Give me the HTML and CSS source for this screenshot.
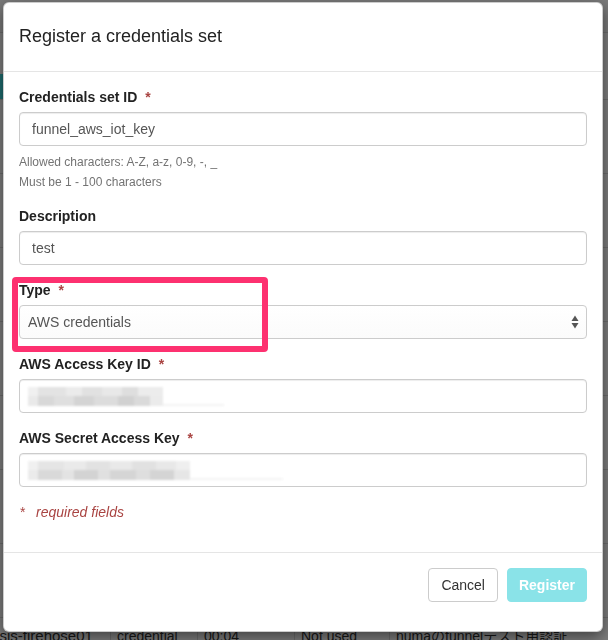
FILE: index.html
```html
<!DOCTYPE html>
<html lang="en">
<head>
<meta charset="utf-8">
<title>Register a credentials set</title>
<link rel="stylesheet" href="styles.css">
</head>
<body>
<div class="page">
  <div class="topbar"></div>
  <div class="subbar"></div>
  <div class="thead"><div class="cell c1"></div><div class="cell c2"></div><div class="cell c3"></div><div class="cell c4"></div><div class="cell c5"></div></div>
  <div class="row"><div class="cell c1"></div><div class="cell c2"></div><div class="cell c3"></div><div class="cell c4"></div><div class="cell c5"></div></div>
  <div class="row"><div class="cell c1"></div><div class="cell c2"></div><div class="cell c3"></div><div class="cell c4"></div><div class="cell c5"></div></div>
  <div class="row"><div class="cell c1"></div><div class="cell c2"></div><div class="cell c3"></div><div class="cell c4"></div><div class="cell c5"></div></div>
  <div class="row"><div class="cell c1"></div><div class="cell c2"></div><div class="cell c3"></div><div class="cell c4"></div><div class="cell c5"></div></div>
  <div class="row"><div class="cell c1"></div><div class="cell c2"></div><div class="cell c3"></div><div class="cell c4"></div><div class="cell c5"></div></div>
  <div class="row"><div class="cell c1"></div><div class="cell c2"></div><div class="cell c3"></div><div class="cell c4"></div><div class="cell c5"></div></div>
  <div class="row"><div class="cell c1"></div><div class="cell c2"></div><div class="cell c3"></div><div class="cell c4"></div><div class="cell c5"></div></div>
  <div class="row last"><div class="cell c1"><span class="shift">kinesis-firehose01</span></div><div class="cell c2">credential</div><div class="cell c3">00:04</div><div class="cell c4">Not used</div><div class="cell c5">numaのfunnelテスト用認証</div></div>
</div>
<div class="backdrop"></div>

<div class="modal">
  <div class="modal-header">
    <h4 class="modal-title">Register a credentials set</h4>
  </div>
  <div class="modal-body">
    <div class="form-group with-help">
      <div class="label">Credentials set ID <span class="req">*</span></div>
      <div class="input">funnel_aws_iot_key</div>
      <p class="help first">Allowed characters: A-Z, a-z, 0-9, -, _</p>
      <p class="help">Must be 1 - 100 characters</p>
    </div>
    <div class="form-group">
      <div class="label">Description</div>
      <div class="input">test</div>
    </div>
    <div class="form-group type-group">
      <div class="label">Type <span class="req">*</span></div>
      <div class="input select">
        <span class="select-value">AWS credentials</span>
        <svg class="select-arrows" width="8" height="14" viewBox="0 0 8 14" aria-hidden="true">
          <path d="M4 0.5 L7.5 6 L0.5 6 Z" fill="#555"/>
          <path d="M4 13.5 L7.5 8 L0.5 8 Z" fill="#555"/>
        </svg>
      </div>
      <div class="highlight"></div>
    </div>
    <div class="form-group">
      <div class="label">AWS Access Key ID <span class="req">*</span></div>
      <div class="input masked"><span class="mosaic mosaic-a"></span></div>
    </div>
    <div class="form-group">
      <div class="label">AWS Secret Access Key <span class="req">*</span></div>
      <div class="input masked"><span class="mosaic mosaic-b"></span></div>
    </div>
    <p class="required-note"><span class="req-star">*</span><span class="req-text">required fields</span></p>
  </div>
  <div class="modal-footer">
    <button class="btn btn-default" type="button">Cancel</button>
    <button class="btn btn-primary" type="button" disabled>Register</button>
  </div>
</div>
</body>
</html>
```

FILE: styles.css
```css
html, body {
  margin: 0;
  padding: 0;
}

body {
  width: 608px;
  height: 640px;
  overflow: hidden;
  background: #ffffff;
  font-family: "Liberation Sans", Arial, "Noto Sans CJK JP", sans-serif;
  font-size: 14px;
  line-height: 20px;
  color: #333333;
}

/* ---------- background page (under the backdrop) ---------- */
.page {
  width: 608px;
  height: 640px;
  overflow: hidden;
}

.topbar {
  height: 33px;
  box-sizing: border-box;
  border-bottom: 1px solid #dddddd;
  background: #f7f7f7;
}

.subbar {
  height: 41px;
  background: #ffffff;
}

.thead {
  display: flex;
  height: 26px;
  box-sizing: border-box;
  border-bottom: 1px solid #dddddd;
}

.thead .c1 {
  background: #3fdde0;
}

.row {
  display: flex;
  height: 74px;
  box-sizing: border-box;
  border-bottom: 1px solid #dddddd;
}

.cell {
  box-sizing: border-box;
  padding: 8px 6px;
  border-right: 1px solid #dddddd;
  white-space: nowrap;
  overflow: hidden;
}

.c1 { width: 111px; padding-left: 0; }
.c2 { width: 87px; }
.c3 { width: 97px; }
.c4 { width: 95px; }
.c5 { flex: 1; border-right: 0; }

.shift {
  display: inline-block;
  margin-left: -28px;
  font-size: 15px;
}

.backdrop {
  position: fixed;
  inset: 0;
  background: rgba(0, 0, 0, 0.5);
}

/* ---------- modal ---------- */
.modal {
  position: absolute;
  left: 3px;
  top: 2px;
  width: 600px;
  box-sizing: border-box;
  background: #ffffff;
  border: 1px solid rgba(0, 0, 0, 0.2);
  border-radius: 6px;
  box-shadow: 0 5px 15px rgba(0, 0, 0, 0.5);
}

.modal-header {
  padding: 21px 15px;
  border-bottom: 1px solid #e5e5e5;
}

.modal-title {
  margin: 0;
  font-size: 18px;
  line-height: 25px;
  padding-bottom: 1px;
  font-weight: normal;
  color: #222222;
}

.modal-body {
  padding: 15px 15px 15px;
}

.form-group {
  margin-bottom: 15px;
}

.form-group.with-help {
  margin-bottom: 14px;
}

.label {
  margin-bottom: 5px;
  font-weight: bold;
  color: #222222;
  line-height: 20px;
}

.req {
  margin-left: 4px;
  color: #a94442;
}

.input {
  height: 34px;
  box-sizing: border-box;
  padding: 6px 12px;
  border: 1px solid #cccccc;
  border-radius: 4px;
  box-shadow: inset 0 1px 1px rgba(0, 0, 0, 0.075);
  font-size: 14px;
  line-height: 20px;
  color: #555555;
  background: #ffffff;
}

.help {
  margin: 0;
  font-size: 12px;
  line-height: 20px;
  color: #737373;
}

.help.first {
  margin-top: 6px;
}

/* select */
.type-group {
  position: relative;
}

.select {
  display: flex;
  align-items: center;
  justify-content: space-between;
  padding: 6px 8px 6px 8px;
  background: linear-gradient(#ffffff, #fbfbfb);
  box-shadow: none;
}

.select-value {
  color: #555555;
}

.select-arrows {
  display: block;
  margin-right: -1px;
}

.highlight {
  position: absolute;
  top: -3px;
  left: -7px;
  width: 256px;
  height: 75px;
  box-sizing: border-box;
  border: 6px solid #fd3170;
  border-radius: 4px;
  pointer-events: none;
}

/* masked (blurred) values */
.masked {
  display: flex;
  align-items: center;
  padding-left: 8px;
}

.mosaic {
  display: block;
  height: 19px;
  filter: blur(0.9px);
}

.mosaic-a {
  width: 196px;
  background:
    linear-gradient(to right,
      #f0f0f0 0 10px, #e3e3e3 10px 38px, #ebebeb 38px 54px, #e1e1e1 54px 74px,
      #e8e8e8 74px 94px, #dedede 94px 110px, #ececec 110px 135px, transparent 135px) top left / 100% 9px no-repeat,
    linear-gradient(to right,
      #e9e9e9 0 10px, #d8d8d8 10px 26px, #dfdfdf 26px 46px, #d4d4d4 46px 66px,
      #dcdcdc 66px 90px, #d1d1d1 90px 106px, #dadada 106px 122px, #ebebeb 122px 135px, transparent 135px) bottom left / 100% 10px no-repeat,
    linear-gradient(#f3f3f3, #f3f3f3) bottom right / 61px 2px no-repeat;
}

.mosaic-b {
  width: 255px;
  background:
    linear-gradient(to right,
      #f0f0f0 0 10px, #e5e5e5 10px 36px, #eaeaea 36px 58px, #e2e2e2 58px 82px,
      #e9e9e9 82px 104px, #e1e1e1 104px 128px, #e8e8e8 128px 148px, #efefef 148px 162px, transparent 162px) top left / 100% 9px no-repeat,
    linear-gradient(to right,
      #ebebeb 0 10px, #d9d9d9 10px 34px, #e3e3e3 34px 46px, #d3d3d3 46px 70px,
      #e0e0e0 70px 82px, #d5d5d5 82px 108px, #dedede 108px 122px, #d4d4d4 122px 146px, #e6e6e6 146px 162px, transparent 162px) bottom left / 100% 10px no-repeat,
    linear-gradient(#f4f4f4, #f4f4f4) bottom right / 93px 2px no-repeat;
}

.required-note {
  margin: 0 0 15px;
  line-height: 20px;
  color: #a94442;
}

.req-star {
  display: inline-block;
  width: 16px;
  padding-left: 1px;
}

.req-text {
  font-style: italic;
}

/* footer */
.modal-footer {
  display: flex;
  justify-content: flex-end;
  gap: 9px;
  padding: 15px 15px 29px;
  border-top: 1px solid #e5e5e5;
}

.btn {
  height: 34px;
  box-sizing: border-box;
  margin: 0;
  padding: 6px 12px;
  border: 1px solid transparent;
  border-radius: 4px;
  font-family: "Liberation Sans", Arial, sans-serif;
  font-size: 14px;
  line-height: 20px;
  cursor: pointer;
}

.btn-default {
  background: #ffffff;
  border-color: #cccccc;
  color: #333333;
}

.btn-primary {
  background: #8ae3e8;
  border-color: #8ae3e8;
  color: #ffffff;
  font-weight: bold;
  padding: 6px 11px;
}
```
